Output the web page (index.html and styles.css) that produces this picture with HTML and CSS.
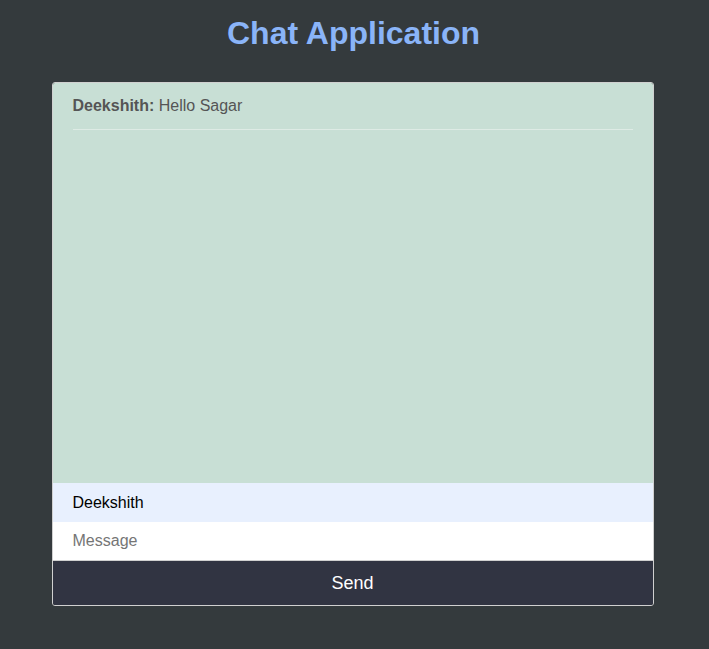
FILE: index.html
```html
<!DOCTYPE html>
<html>
<head>
<meta charset="utf-8">
<link rel="stylesheet" href="styles.css">
</head>
<body>
<h1 class="title">Chat Application</h1>
<div class="chat">
  <div class="messages">
    <div class="message"><span class="author">Deekshith:</span> Hello Sagar</div>
  </div>
  <input class="field field-name" type="text" value="Deekshith">
  <input class="field field-msg" type="text" placeholder="Message">
  <button class="send">Send</button>
</div>
</body>
</html>
```
FILE: styles.css
```css
html, body {
  margin: 0;
  padding: 0;
}
body {
  background: #343a3d;
  font-family: "Liberation Sans", Arial, sans-serif;
  padding-top: 14px;
}
.title {
  margin: 0 0 30px;
  text-align: center;
  color: #8ab4f8;
  font-size: 32px;
  font-weight: bold;
  line-height: 38px;
  position: relative;
  left: -1px;
}
.chat {
  width: 600px;
  margin: 0 auto;
  border: 1px solid #d0d0d0;
  border-radius: 3px;
  overflow: hidden;
  display: flex;
  flex-direction: column;
  position: relative;
  left: -2px;
}
.messages {
  height: 400px;
  background: #c8dfd5;
  padding: 0 20px;
  box-sizing: border-box;
}
.message {
  padding: 14px 0 14px;
  border-bottom: 1px solid #deebe5;
  font-size: 16px;
  line-height: 18px;
  color: #555;
}
.author {
  font-weight: bold;
}
.field {
  display: block;
  width: 100%;
  box-sizing: border-box;
  height: 39px;
  border: none;
  outline: none;
  padding: 0 20px;
  margin: 0;
  font-family: "Liberation Sans", Arial, sans-serif;
  font-size: 16px;
  color: #000;
}
.field-name {
  background: #e8f0fe;
}
.field-msg {
  background: #fff;
  border-bottom: 1px solid #d0d0d0;
}
.field-msg::placeholder {
  color: #757575;
}
.send {
  display: block;
  width: 100%;
  height: 44px;
  border: none;
  margin: 0;
  background: #313442;
  color: #fff;
  font-family: "Liberation Sans", Arial, sans-serif;
  font-size: 18px;
}
```
